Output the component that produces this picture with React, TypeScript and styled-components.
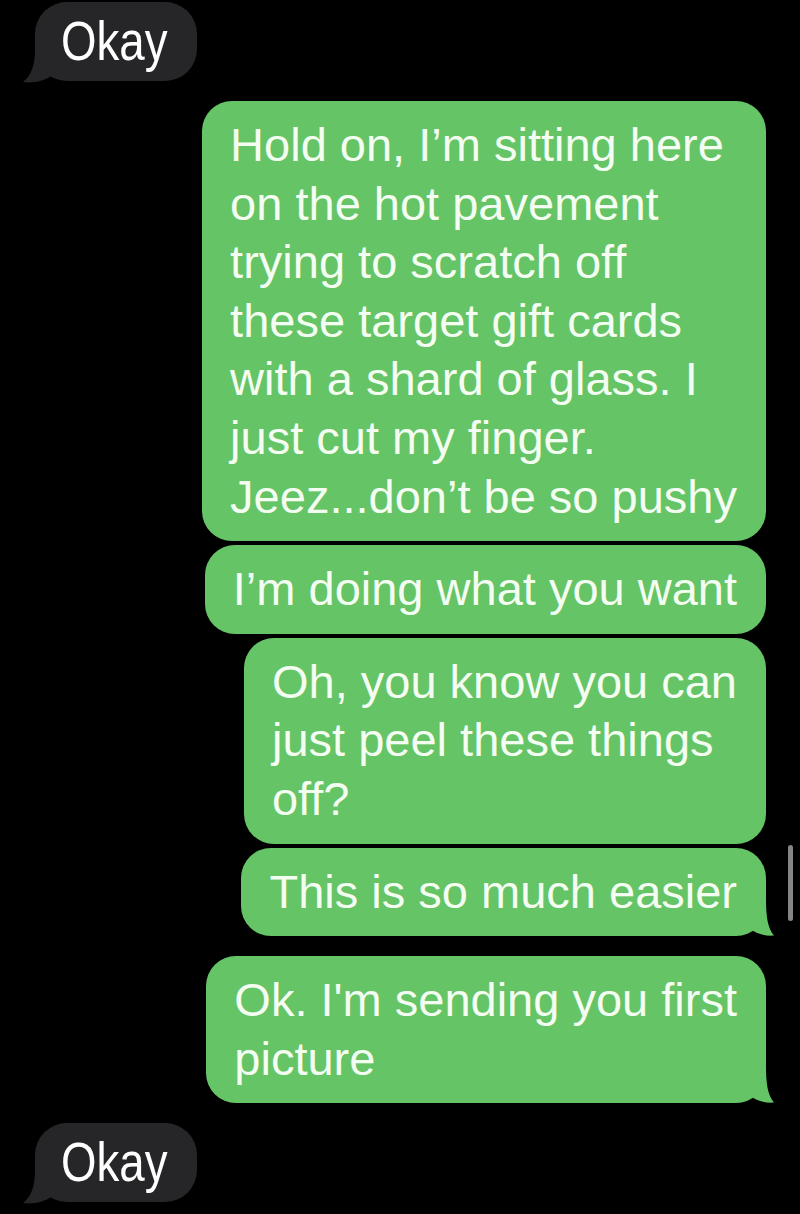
import React from "react";
import styled, { createGlobalStyle } from "styled-components";

const GlobalStyle = createGlobalStyle`
  html, body {
    margin: 0;
    padding: 0;
    background: #000;
  }
  body {
    font-family: "Liberation Sans", Arial, sans-serif;
    -webkit-font-smoothing: antialiased;
  }
`;

const Screen = styled.div`
  position: relative;
  width: 800px;
  height: 1214px;
  overflow: hidden;
  background: #000;
  box-sizing: border-box;
  padding: 2px 34px 0 35px;
  display: flex;
  flex-direction: column;
  gap: 20px;
`;

const Group = styled.div<{ $out: boolean }>`
  display: flex;
  flex-direction: column;
  align-items: ${(p) => (p.$out ? "flex-end" : "flex-start")};
  gap: 4px;
`;

const SentBubble = styled.div`
  position: relative;
  background: #65c466;
  color: #f4fdf1;
  border-radius: 30px;
  padding: 15px 29px 15px 28px;
  font-family: "Liberation Sans", Arial, sans-serif;
  font-size: 47px;
  line-height: 58.6px;
`;

const ReceivedBubble = styled.div`
  position: relative;
  background: #262628;
  color: #ffffff;
  border-radius: 32px;
  padding: 0 30px 0 26px;
  height: 79px;
  font-family: "Liberation Sans", Arial, sans-serif;
  font-size: 55px;
  line-height: 79px;
`;

const Line = styled.span`
  display: block;
  white-space: nowrap;
`;

const NarrowText = styled.span`
  display: inline-block;
  white-space: nowrap;
  transform: scaleX(0.83);
  transform-origin: 0 50%;
  margin-right: -22px;
`;

const TailSvg = styled.svg<{ $out: boolean }>`
  position: absolute;
  bottom: ${(p) => (p.$out ? "0" : "-2px")};
  ${(p) => (p.$out ? "right: -8px;" : "left: -12px; transform: scaleX(-1);")}
  display: block;
`;

const ScrollIndicator = styled.div`
  position: absolute;
  left: 788px;
  top: 845px;
  width: 5px;
  height: 76px;
  border-radius: 3px;
  background: #858585;
`;

function Tail({ out }: { out: boolean }) {
  if (out) {
    return (
      <TailSvg $out width="28" height="38" viewBox="0 0 28 38">
        <path d="M0 0 H20 C20 18 21.5 30 28 37.6 C20 38.4 11 36 4 31 H0 Z" fill="#65c466" />
      </TailSvg>
    );
  }
  return (
    <TailSvg $out={false} width="32" height="34" viewBox="0 0 32 34">
      <path d="M0 0 H20 C20 15 23 26 32 33 C22 34.5 11 32 4 27 H0 Z" fill="#262628" />
    </TailSvg>
  );
}

type Msg = { lines: string[]; tail?: boolean };
type Thread = { out: boolean; messages: Msg[] };

const threads: Thread[] = [
  { out: false, messages: [{ lines: ["Okay"], tail: true }] },
  {
    out: true,
    messages: [
      {
        lines: [
          "Hold on, I\u2019m sitting here",
          "on the hot pavement",
          "trying to scratch off",
          "these target gift cards",
          "with a shard of glass. I",
          "just cut my finger.",
          "Jeez...don\u2019t be so pushy",
        ],
      },
      { lines: ["I\u2019m doing what you want"] },
      { lines: ["Oh, you know you can", "just peel these things", "off?"] },
      { lines: ["This is so much easier"], tail: true },
    ],
  },
  { out: true, messages: [{ lines: ["Ok. I'm sending you first", "picture"], tail: true }] },
  { out: false, messages: [{ lines: ["Okay"], tail: true }] },
];

export default function App() {
  return (
    <>
      <GlobalStyle />
      <Screen>
        {threads.map((t, i) => (
          <Group key={i} $out={t.out}>
            {t.messages.map((m, j) =>
              t.out ? (
                <SentBubble key={j}>
                  {m.lines.map((l, k) => (
                    <Line key={k}>{l}</Line>
                  ))}
                  {m.tail && <Tail out />}
                </SentBubble>
              ) : (
                <ReceivedBubble key={j}>
                  {m.lines.map((l, k) => (
                    <NarrowText key={k}>{l}</NarrowText>
                  ))}
                  {m.tail && <Tail out={false} />}
                </ReceivedBubble>
              )
            )}
          </Group>
        ))}
        <ScrollIndicator />
      </Screen>
    </>
  );
}
